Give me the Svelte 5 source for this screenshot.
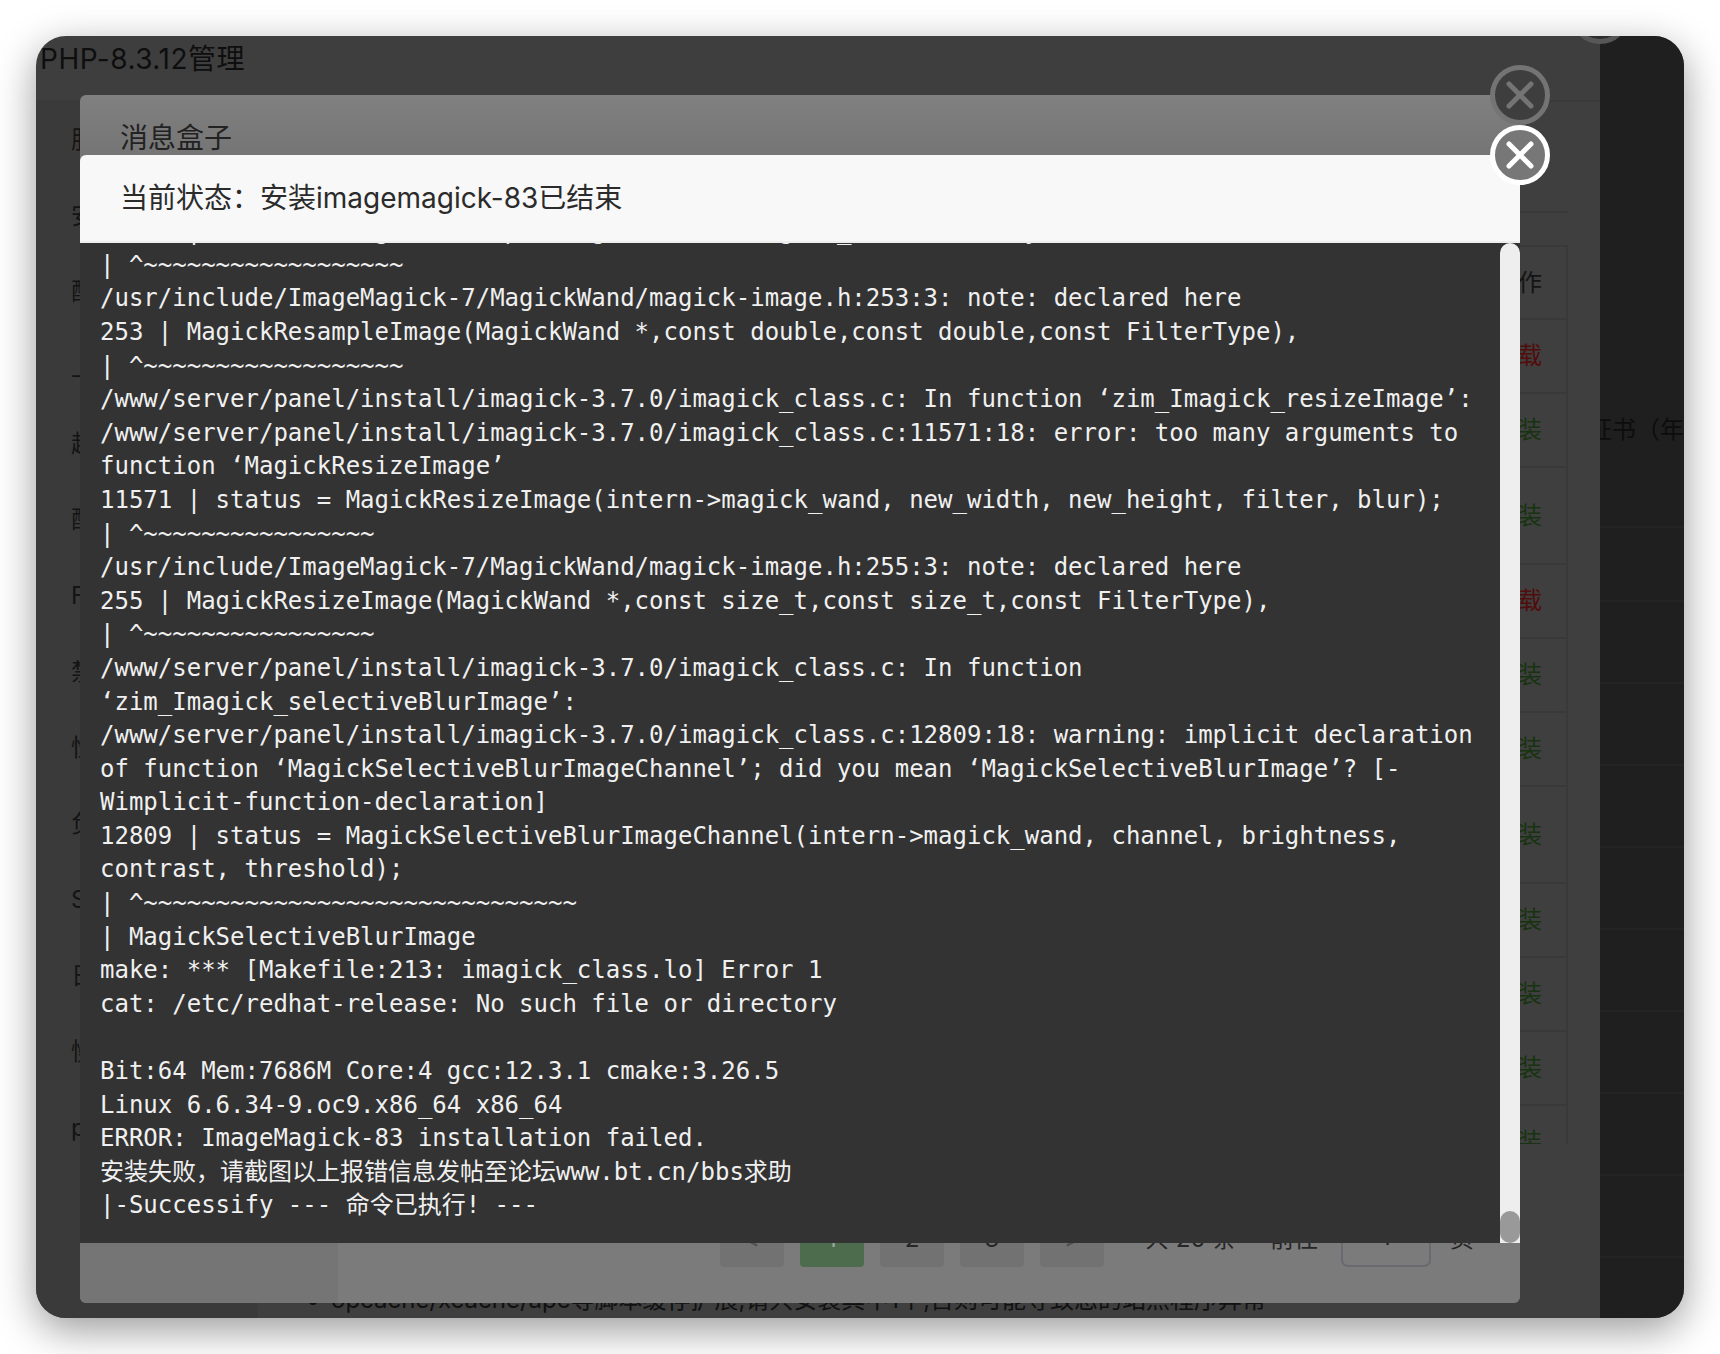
<script>
  const menu = ['服务', '安装扩展', '配置修改', '上传限制', '超时限制', '配置文件', 'FPM配置', '禁用函数', '性能调整', '负载状态', 'Session配置', '日志', '慢日志', 'phpinfo'];

  // last column of the extension table: only this part sticks out from under the modals
  const rows = [
    { action: '卸载', kind: 'del' },
    { action: '安装', kind: 'add' },
    { action: '安装', kind: 'add', tall: true },
    { action: '卸载', kind: 'del' },
    { action: '安装', kind: 'add' },
    { action: '安装', kind: 'add' },
    { action: '安装', kind: 'add', tall: true },
    { action: '安装', kind: 'add' },
    { action: '安装', kind: 'add' },
    { action: '安装', kind: 'add' },
    { action: '安装', kind: 'add' }
  ];

  const log = [
    '11496 | status = MagickResampleImage(intern->magick_wand, xres, yres',
    '| ^~~~~~~~~~~~~~~~~~~',
    '/usr/include/ImageMagick-7/MagickWand/magick-image.h:253:3: note: declared here',
    '253 | MagickResampleImage(MagickWand *,const double,const double,const FilterType),',
    '| ^~~~~~~~~~~~~~~~~~~',
    '/www/server/panel/install/imagick-3.7.0/imagick_class.c: In function ‘zim_Imagick_resizeImage’:',
    '/www/server/panel/install/imagick-3.7.0/imagick_class.c:11571:18: error: too many arguments to',
    'function ‘MagickResizeImage’',
    '11571 | status = MagickResizeImage(intern->magick_wand, new_width, new_height, filter, blur);',
    '| ^~~~~~~~~~~~~~~~~',
    '/usr/include/ImageMagick-7/MagickWand/magick-image.h:255:3: note: declared here',
    '255 | MagickResizeImage(MagickWand *,const size_t,const size_t,const FilterType),',
    '| ^~~~~~~~~~~~~~~~~',
    '/www/server/panel/install/imagick-3.7.0/imagick_class.c: In function',
    '‘zim_Imagick_selectiveBlurImage’:',
    '/www/server/panel/install/imagick-3.7.0/imagick_class.c:12809:18: warning: implicit declaration',
    'of function ‘MagickSelectiveBlurImageChannel’; did you mean ‘MagickSelectiveBlurImage’? [-',
    'Wimplicit-function-declaration]',
    '12809 | status = MagickSelectiveBlurImageChannel(intern->magick_wand, channel, brightness,',
    'contrast, threshold);',
    '| ^~~~~~~~~~~~~~~~~~~~~~~~~~~~~~~',
    '| MagickSelectiveBlurImage',
    'make: *** [Makefile:213: imagick_class.lo] Error 1',
    'cat: /etc/redhat-release: No such file or directory',
    '',
    'Bit:64 Mem:7686M Core:4 gcc:12.3.1 cmake:3.26.5',
    'Linux 6.6.34-9.oc9.x86_64 x86_64',
    'ERROR: ImageMagick-83 installation failed.',
    '安装失败，请截图以上报错信息发帖至论坛www.bt.cn/bbs求助',
    '|-Successify --- 命令已执行! ---'
  ];

  const sideRows = [1, 2, 3, 4, 5, 6, 7, 8, 9];
</script>

<div class="window">
  <!-- page behind everything -->
  <div class="dialog">
    <div class="dialog-title">PHP-8.3.12管理</div>
    <div class="dialog-body">
      <nav class="menu">
        {#each menu as item}
          <div class="menu-item">{item}</div>
        {/each}
      </nav>
      <div class="content">
        <div class="tabs"></div>
        <div class="table">
          <div class="row head"><span>操作</span></div>
          {#each rows as r}
            <div class="row" class:tall={r.tall}>
              <span class={r.kind}>{r.action}</span>
            </div>
          {/each}
        </div>
        <ul class="notes">
          <li>opcache/xcache/apc等脚本缓存扩展,请只安装其中1个,否则可能导致您的站点程序异常</li>
        </ul>
      </div>
    </div>
  </div>

  <aside class="side">
    <div class="side-top"><span>证书（年费）</span></div>
    {#each sideRows as n}
      <div class="side-row"></div>
    {/each}
  </aside>

  <!-- first message box, dimmed -->
  <div class="msg-box">
    <div class="msg-title">消息盒子</div>
    <div class="msg-footer">
      <div class="msg-left"></div>
      <div class="pager">
        <span class="pg arrow">&lt;</span>
        <span class="pg current">1</span>
        <span class="pg">2</span>
        <span class="pg">3</span>
        <span class="pg arrow">&gt;</span>
        <span class="total">共 20 条</span>
        <span class="goto">前往</span>
        <span class="page-input">1</span>
        <span class="unit">页</span>
      </div>
    </div>
  </div>

  <!-- install log on top -->
  <div class="log-box">
    <div class="log-title">当前状态：安装imagemagick-83已结束</div>
    <div class="log">
      {#each log as line}
        <div class="line">{line}</div>
      {/each}
      <div class="scrollbar"><div class="thumb"></div></div>
    </div>
  </div>

  <svg class="close close-back" viewBox="0 0 60 60">
    <circle cx="30" cy="30" r="27.5" fill="#2c2c2c" stroke="#575757" stroke-width="5" />
  </svg>
  <svg class="close close-mid" viewBox="0 0 60 60">
    <circle cx="30" cy="30" r="27.5" fill="#3e3e3e" stroke="#747474" stroke-width="5" />
    <path d="M19 19 L41 41 M41 19 L19 41" stroke="#747474" stroke-width="5" stroke-linecap="round" />
  </svg>
  <svg class="close close-top" viewBox="0 0 60 60">
    <circle cx="30" cy="30" r="27.5" fill="#777" stroke="#fff" stroke-width="5" />
    <path d="M19 19 L41 41 M41 19 L19 41" stroke="#fff" stroke-width="5" stroke-linecap="round" />
  </svg>
</div>

<style>
  :global(body) {
    margin: 0;
    background: #fff;
  }

  .window {
    position: relative;
    display: flex;
    box-sizing: border-box;
    width: 1648px;
    height: 1282px;
    margin: 36px;
    border-radius: 30px;
    overflow: hidden;
    background: #3e3e3e;
    font-family: Inter, "Noto Sans CJK SC", sans-serif;
    font-size: 24px;
    color: #111;
    box-shadow: 0 12px 40px rgba(0, 0, 0, 0.4);
  }

  .dialog {
    width: 1564px;
    flex: none;
    display: flex;
    flex-direction: column;
  }

  .dialog-title {
    box-sizing: border-box;
    height: 66px;
    padding: 0 0 0 4px;
    font-size: 28px;
    letter-spacing: 0.5px;
    line-height: 46px;
    color: #0e0e0e;
    border-bottom: 2px solid #3a3a3a;
  }

  .dialog-body {
    flex: 1;
    display: flex;
    min-height: 0;
  }

  .menu {
    width: 222px;
    flex: none;
    background: #3a3a3a;
  }

  .menu-item {
    height: 76px;
    line-height: 76px;
    padding-left: 35px;
    color: #141414;
    white-space: nowrap;
  }

  .content {
    flex: 1;
    min-width: 0;
    padding: 0 32px;
    background: #3f3f3f;
  }

  .tabs {
    height: 111px;
    border-bottom: 2px solid #393939;
    box-sizing: border-box;
    margin-bottom: 32px;
  }

  .table {
    box-sizing: border-box;
    height: 899px;
    overflow: hidden;
    border: 2px solid #393939;
    border-bottom: 0;
  }

  .row {
    box-sizing: border-box;
    height: 74px;
    display: flex;
    align-items: center;
    justify-content: flex-end;
    padding-right: 24px;
    border-bottom: 2px solid #393939;
    line-height: 1;
  }

  .row.head {
    height: 73px;
    color: #141414;
  }

  .row.tall {
    height: 97px;
  }

  .del {
    color: #520c0c;
  }

  .add {
    color: #17330f;
  }

  .notes {
    margin: 139px 0 0;
    padding: 0 0 0 41px;
    line-height: 34px;
    color: #111;
    white-space: nowrap;
  }

  .side {
    flex: 1;
    min-width: 0;
    overflow: hidden;
    background: #1f1f1f;
  }

  .side-top {
    box-sizing: border-box;
    height: 492px;
    padding: 0 0 79px;
    margin-left: -12px;
    display: flex;
    align-items: flex-end;
    white-space: nowrap;
    color: #0d0d0d;
    line-height: 34px;
    border-bottom: 2px solid #242424;
  }

  .side-row {
    box-sizing: border-box;
    height: 82px;
    border-bottom: 2px solid #242424;
  }

  .side-row:nth-child(2) {
    height: 74px;
  }

  .msg-box {
    position: absolute;
    left: 44px;
    top: 59px;
    width: 1440px;
    height: 1208px;
    display: flex;
    flex-direction: column;
    justify-content: space-between;
    border-radius: 6px;
    overflow: hidden;
    background: linear-gradient(#808080, #757575 60px, #7b7b7b 60px);
  }

  .msg-title {
    padding-left: 40px;
    font-size: 28px;
    line-height: 87px;
    color: #222;
  }

  .msg-footer {
    height: 88px;
    display: flex;
  }

  .msg-left {
    width: 258px;
    flex: none;
    background: #757575;
  }

  .pager {
    flex: 1;
    display: flex;
    align-items: flex-start;
    padding-left: 382px;
    color: #262626;
    line-height: 48px;
  }

  .pg {
    width: 64px;
    height: 52px;
    margin-right: 16px;
    border-radius: 4px;
    text-align: center;
    background: #727272;
  }

  .pg.arrow {
    color: #505050;
  }

  .pg.current {
    background: #4d6b4d;
    color: #9aa89a;
  }

  .total {
    margin-left: 25px;
    width: 125px;
  }

  .goto {
    width: 71px;
  }

  .page-input {
    box-sizing: border-box;
    width: 90px;
    height: 52px;
    line-height: 40px;
    text-align: center;
    border: 2px solid #696970;
    border-radius: 7px;
  }

  .unit {
    margin-left: 19px;
  }

  .log-box {
    position: absolute;
    left: 44px;
    top: 119px;
    width: 1440px;
    height: 1088px;
    display: flex;
    flex-direction: column;
    border-radius: 6px 6px 0 0;
    overflow: hidden;
  }

  .log-title {
    box-sizing: border-box;
    height: 88px;
    flex: none;
    padding-left: 40px;
    font-size: 28px;
    line-height: 86px;
    color: #2b2b2b;
    background: #f8f8f8;
    border-bottom: 2px solid #eee;
  }

  .log {
    position: relative;
    flex: 1;
    min-height: 0;
    display: flex;
    flex-direction: column;
    justify-content: flex-end;
    overflow: hidden;
    padding: 0 20px 20px;
    background: #333;
    font-family: "DejaVu Sans Mono", "Noto Sans CJK SC", monospace;
    font-size: 24px;
    line-height: 33.6px;
    color: #f0f0f0;
  }

  .line {
    flex: none;
    height: 33.6px;
    white-space: pre;
  }

  .scrollbar {
    position: absolute;
    top: 0;
    right: 0;
    bottom: 0;
    width: 20px;
    border-radius: 10px 10px 0 0;
    background: #eee;
    display: flex;
    align-items: flex-end;
  }

  .thumb {
    width: 20px;
    height: 32px;
    border-radius: 10px;
    background: #999;
  }

  .close {
    position: absolute;
    width: 60px;
    height: 60px;
  }

  .close-back {
    left: 1534px;
    top: -52px;
  }

  .close-mid {
    left: 1454px;
    top: 29px;
  }

  .close-top {
    left: 1454px;
    top: 89px;
  }
</style>
